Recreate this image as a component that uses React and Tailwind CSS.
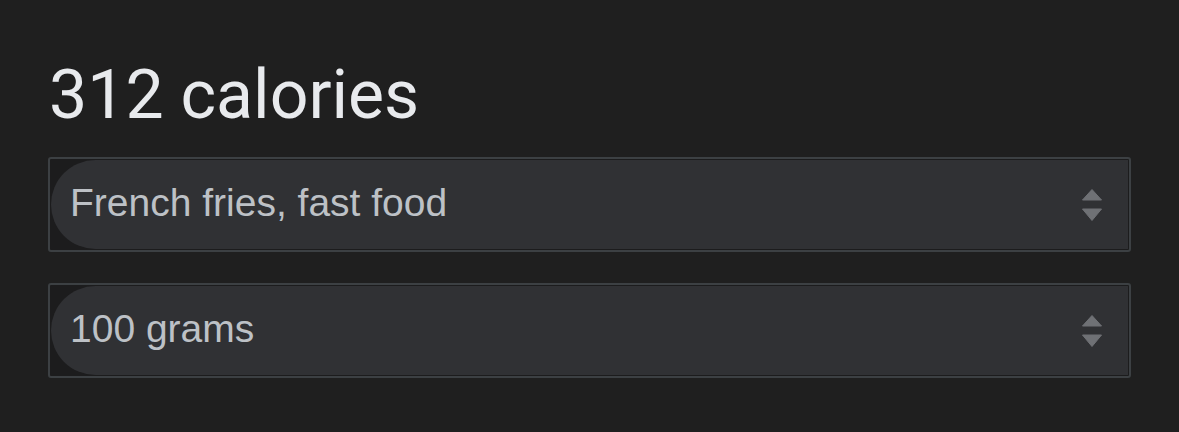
import React from 'react';

function Arrows() {
  return (
    <svg width="22" height="34" viewBox="0 0 22 34" className="shrink-0">
      <path d="M11 1.5 L20.5 12 L1.5 12 Z" fill="#6f7175" strokeLinejoin="round" stroke="#6f7175" strokeWidth="1" />
      <path d="M1.5 21 L20.5 21 L11 32.5 Z" fill="#6f7175" strokeLinejoin="round" stroke="#6f7175" strokeWidth="1" />
    </svg>
  );
}

function SelectBox({ label }) {
  return (
    <div className="h-[95px] border-2 border-[#3c4043] rounded-[3px] bg-[#1c1c1d] p-px">
      <div className="h-full rounded-l-full bg-[#303134] flex items-center justify-between pl-[19px] pr-[25px]">
        <span className="text-[39px] text-[#bdc1c6] font-['Liberation_Sans',Arial,sans-serif] -mt-[3px]">
          {label}
        </span>
        <Arrows />
      </div>
    </div>
  );
}

export default function App() {
  return (
    <div className="w-[1179px] h-[432px] bg-[#1f1f1f] pl-[48px] pr-[48px] pt-[61px] overflow-hidden">
      <h1 className="text-[68px] leading-none text-[#e8eaed] font-['Roboto',sans-serif] pl-[1px] mb-[28px]">
        312 calories
      </h1>
      <div className="flex flex-col gap-[31px]">
        <SelectBox label="French fries, fast food" />
        <SelectBox label="100 grams" />
      </div>
    </div>
  );
}
